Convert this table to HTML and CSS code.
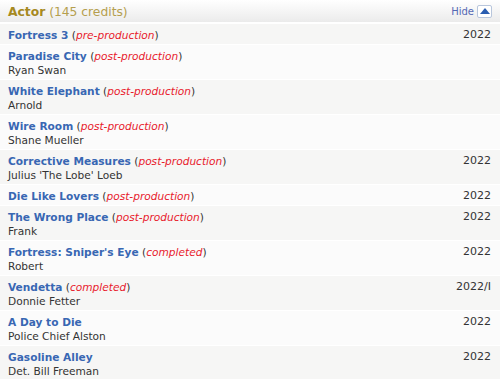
FILE: index.html
```html
<!DOCTYPE html>
<html>
<head>
<meta charset="utf-8">
<link rel="stylesheet" href="styles.css">
</head>
<body>
<div class="filmo">
  <div class="head">
    <div class="cat"><span class="cat-name">Actor</span> <span class="cat-count">(145 credits)</span></div>
    <div class="hide"><span class="hide-text">Hide</span><span class="hide-btn"><svg width="10" height="6" viewBox="0 0 10 6"><path d="M0 6 L5 0 L10 6 Z" fill="#2a5db0"/></svg></span></div>
  </div>
  <div class="rows">
    <div class="row odd"><div class="info"><div><a class="title">Fortress 3</a> (<span class="status">pre-production</span>)</div></div><div class="year">2022</div></div>
    <div class="row even"><div class="info"><div><a class="title">Paradise City</a> (<span class="status">post-production</span>)</div><div class="role">Ryan Swan</div></div><div class="year"></div></div>
    <div class="row odd"><div class="info"><div><a class="title">White Elephant</a> (<span class="status">post-production</span>)</div><div class="role">Arnold</div></div><div class="year"></div></div>
    <div class="row even"><div class="info"><div><a class="title">Wire Room</a> (<span class="status">post-production</span>)</div><div class="role">Shane Mueller</div></div><div class="year"></div></div>
    <div class="row odd"><div class="info"><div><a class="title">Corrective Measures</a> (<span class="status">post-production</span>)</div><div class="role">Julius 'The Lobe' Loeb</div></div><div class="year">2022</div></div>
    <div class="row even"><div class="info"><div><a class="title">Die Like Lovers</a> (<span class="status">post-production</span>)</div></div><div class="year">2022</div></div>
    <div class="row odd"><div class="info"><div><a class="title">The Wrong Place</a> (<span class="status">post-production</span>)</div><div class="role">Frank</div></div><div class="year">2022</div></div>
    <div class="row even"><div class="info"><div><a class="title">Fortress: Sniper's Eye</a> (<span class="status">completed</span>)</div><div class="role">Robert</div></div><div class="year">2022</div></div>
    <div class="row odd"><div class="info"><div><a class="title">Vendetta</a> (<span class="status">completed</span>)</div><div class="role">Donnie Fetter</div></div><div class="year">2022/I</div></div>
    <div class="row even"><div class="info"><div><a class="title">A Day to Die</a></div><div class="role">Police Chief Alston</div></div><div class="year">2022</div></div>
    <div class="row odd"><div class="info"><div><a class="title">Gasoline Alley</a></div><div class="role">Det. Bill Freeman</div></div><div class="year">2022</div></div>
  </div>
</div>
</body>
</html>
```
FILE: styles.css
```css
html, body {
  margin: 0;
  padding: 0;
  background: #ffffff;
}
body {
  font-family: "DejaVu Sans", Verdana, sans-serif;
  font-size: 10.6px;
  color: #333333;
  width: 500px;
  overflow: hidden;
}
.filmo {
  display: flex;
  flex-direction: column;
}
.head {
  height: 22px;
  display: flex;
  align-items: center;
  justify-content: space-between;
  padding: 0 8px;
  background: linear-gradient(#ffffff, #ebebeb);
  border-bottom: 2px solid #ffffff;
}
.cat {
  font-size: 12.3px;
  color: #b59f4e;
  padding-top: 1px;
}
.cat-name {
  font-weight: bold;
  color: #a68a1f;
}
.hide {
  display: flex;
  align-items: center;
  gap: 3px;
}
.hide-text {
  color: #5468b4;
  font-size: 10px;
}
.hide-btn {
  width: 13px;
  height: 11px;
  border: 1px solid #b8c6dc;
  border-radius: 2px;
  background: #ffffff;
  display: flex;
  align-items: center;
  justify-content: center;
}
.rows {
  display: flex;
  flex-direction: column;
}
.row {
  display: flex;
  justify-content: space-between;
  padding: 4px 9px 2px 8px;
  line-height: 14px;
  border-bottom: 1px solid #ffffff;
}
.odd { background: #f6f6f5; }
.even { background: #fbfbfb; }
.title {
  font-weight: bold;
  color: #3867b3;
  text-decoration: none;
}
.status {
  color: #e8202c;
  font-style: italic;
}
.role {
  color: #333333;
}
.year {
  color: #333333;
  font-size: 11px;
}
```
